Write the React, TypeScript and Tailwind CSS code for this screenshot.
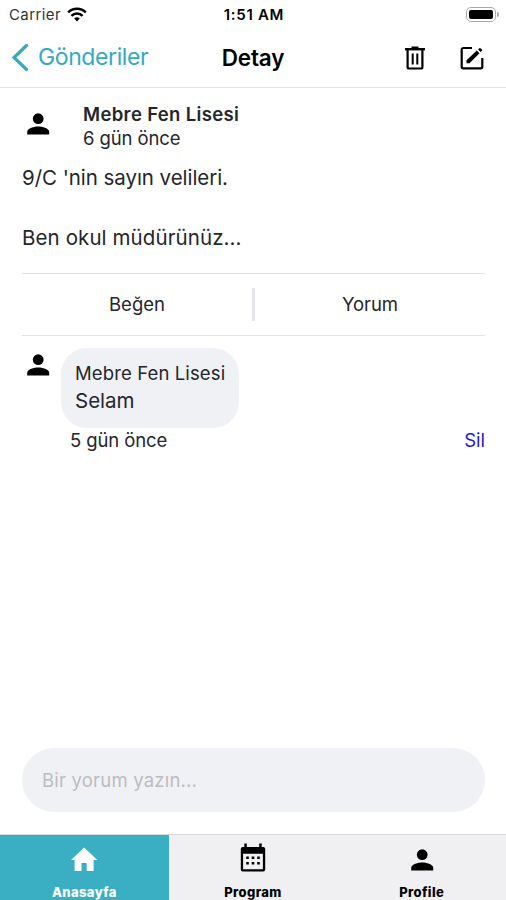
import { ReactNode } from 'react'

function PersonIcon() {
  return (
    <svg width="24" height="24" viewBox="0 0 24 24" fill="currentColor">
      <circle cx="12.2" cy="6.7" r="5.4" />
      <path d="M1.200 22.500v-2.600c0-3.600 7.300-5.300 11-5.300s11 1.700 11 5.300v2.600z" />
    </svg>
  )
}

function HomeIcon() {
  return (
    <svg width="28" height="28" viewBox="0 0 28 28" fill="currentColor">
      <path d="M14.200 1.500 1 14h3.600v11h6.900v-8h5.200v8h6.900V14h3.700z" />
    </svg>
  )
}

function CalendarIcon() {
  return (
    <svg width="26" height="30" viewBox="0 0 26 30" fill="currentColor" className="mb-[3px]">
      <path
        fillRule="evenodd"
        d="M4.300 0.500h2.500v3.500h12.400V0.500h2.500v3.500h1.500A2 2 0 0 1 25.200 6v20.500a2 2 0 0 1-2 2H2.800a2 2 0 0 1-2-2V6a2 2 0 0 1 2-2h1.500zM3.100 10.700v15.500h19.800V10.700z"
      />
      <path d="M6.200 13.500h2.600v2.600H6.200zM11.700 13.500h2.600v2.600h-2.600zM17.200 13.500h2.600v2.600h-2.600zM6.200 19h2.600v2.600H6.200zM11.700 19h2.600v2.600h-2.600zM17.200 19h2.600v2.600h-2.600z" />
    </svg>
  )
}

function TrashIcon() {
  return (
    <svg width="22" height="24" viewBox="0 0 22 24" fill="none" stroke="currentColor" strokeWidth="2">
      <path d="M1 3.200h20" strokeWidth="2.400" />
      <path d="M7.500 1.500h7" />
      <path d="M3.600 4v17a1.500 1.500 0 0 0 1.500 1.500h11.800a1.500 1.500 0 0 0 1.500-1.500V4" strokeWidth="2.200" />
      <path d="M8.700 7.500v11M13.300 7.500v11" />
    </svg>
  )
}

function EditIcon() {
  return (
    <svg width="24" height="24" viewBox="0 0 24 24" fill="none" stroke="currentColor" strokeWidth="2.200">
      <path d="M12 2H3.300A1.600 1.600 0 0 0 1.700 3.600v17.200a1.600 1.600 0 0 0 1.600 1.600h17.400a1.600 1.600 0 0 0 1.600-1.600V12" />
      <path d="M6.500 17.300v-3L16.800 4.500l2.700 2.700L9.500 17.300z" fill="currentColor" stroke="none" />
      <path d="m18 3.500 1.400-1.300a.8.8 0 0 1 1.100 0l1.400 1.400a.8.8 0 0 1 0 1.100l-1.300 1.400z" fill="currentColor" stroke="none" />
    </svg>
  )
}

function WifiIcon() {
  return (
    <svg width="20" height="15" viewBox="0 0 20 15" fill="none" stroke="currentColor" strokeWidth="2.500">
      <path d="M1.200 5.400a12.500 12.500 0 0 1 17.600 0" />
      <path d="M4.400 8.900a8 8 0 0 1 11.200 0" />
      <path d="M7.200 11.500a4 4 0 0 1 5.600 0L10 14.400z" fill="currentColor" stroke="none" />
    </svg>
  )
}

/** Status bar: carrier, clock and battery */
function StatusBar() {
  return (
    <div className="grid h-7 grid-cols-3 items-center pl-[9px] pr-[7px]">
      <div className="flex items-center gap-[6px]">
        <span className="pt-[2px] text-[15px] tracking-[0.400px] text-[#333]">Carrier</span>
        <WifiIcon />
      </div>
      <span className="pt-[2px] text-center text-[15px] font-semibold tracking-[0.700px]">1:51 AM</span>
      <div className="flex items-center justify-end gap-px">
        <div className="h-[15px] w-[30px] rounded-[5px] border border-[#aaa] p-[2px]">
          <div className="h-full rounded-[2px] bg-black" />
        </div>
        <div className="h-[5px] w-[2px] rounded-r-full bg-[#aaa]" />
      </div>
    </div>
  )
}

function TopBar() {
  return (
    <header className="grid h-[60px] grid-cols-3 items-center border-b border-[#e2e2e4] px-3">
      <div className="flex items-center gap-[9px] text-[#36aabd]">
        <svg width="17" height="28" viewBox="0 0 17 28" fill="none" stroke="currentColor" strokeWidth="3.200" strokeLinecap="round">
          <path d="M14.500 1.500 2 13.500l12.500 12" />
        </svg>
        <span className="text-[23px] tracking-[-0.400px]">Gönderiler</span>
      </div>
      <h1 className="text-center text-[22.500px] font-semibold tracking-[-0.200px]">Detay</h1>
      <div className="flex items-center justify-end gap-[34px] pr-[10px]">
        <TrashIcon />
        <EditIcon />
      </div>
    </header>
  )
}

function Post() {
  return (
    <article className="pl-[22px] pr-[21px] text-[#24262d]">
      <div className="flex h-[75px] pt-[15px]">
        <div className="w-[61px] pl-1 pt-[9px] text-black">
          <PersonIcon />
        </div>
        <div className="text-[18.500px] leading-[23.500px]">
          <div className="font-semibold tracking-[0.350px]">Mebre Fen Lisesi</div>
          <div className="tracking-[-0.100px]">6 gün önce</div>
        </div>
      </div>
      <div className="h-[110px] text-[20.500px] leading-[29.500px]">
        <p className="tracking-[-0.050px]">9/C 'nin sayın velileri.</p>
        <p className="mt-[30px] tracking-[0.100px]">Ben okul müdürünüz...</p>
      </div>
      <div className="flex h-[63px] items-center border-b border-t border-[#e1e3e5] text-[18.500px]">
        <div className="flex-1 text-center">Beğen</div>
        <div className="h-[33px] w-[3px] bg-[#e4e6e9]" />
        <div className="flex-1 text-center tracking-[-0.100px]">Yorum</div>
      </div>
    </article>
  )
}

function Comment() {
  return (
    <section className="flex pl-[22px] pr-[21px] pt-3 text-[#24262d]">
      <div className="w-[39px] pl-1 pt-[5px] text-black">
        <PersonIcon />
      </div>
      <div className="flex-1">
        <div className="h-[80px] w-[178px] rounded-[26px] bg-[#f0f1f5] pl-[14px] pt-[12px] leading-[27px]">
          <div className="text-[18.500px] tracking-[0.120px]">Mebre Fen Lisesi</div>
          <div className="text-[20.500px]">Selam</div>
        </div>
        <div className="flex justify-between pl-[9px] text-[18.500px] leading-6">
          <span className="tracking-[-0.100px]">5 gün önce</span>
          <button className="text-[#2118dc]">Sil</button>
        </div>
      </div>
    </section>
  )
}

function Tab({ icon, label, active }: { icon: ReactNode; label: string; active?: boolean }) {
  return (
    <div
      className={
        active
          ? 'flex flex-1 flex-col items-center bg-[#3aafc3] text-white'
          : 'flex flex-1 flex-col items-center text-black'
      }
    >
      <div className="flex h-[49px] items-center">{icon}</div>
      <span className="text-[13px] font-extrabold leading-4 tracking-[0.400px]">{label}</span>
    </div>
  )
}

export default function App() {
  return (
    <div className="flex h-[900px] w-[506px] flex-col overflow-hidden bg-white font-['Inter','Liberation_Sans',sans-serif] text-black">
      <StatusBar />
      <TopBar />
      <Post />
      <Comment />

      <div className="mb-[22px] mt-auto px-[22px]">
        <input
          className="h-[64px] w-[463px] rounded-full bg-[#f0f1f5] px-5 text-[18.500px] tracking-[0.200px] outline-none placeholder:text-[#bbbcc1]"
          placeholder="Bir yorum yazın..."
        />
      </div>

      <nav className="flex h-[66px] border-t border-[#d8d8da] bg-[#f0f0f2]">
        <Tab icon={<HomeIcon />} label="Anasayfa" active />
        <Tab icon={<CalendarIcon />} label="Program" />
        <Tab icon={<PersonIcon />} label="Profile" />
      </nav>
    </div>
  )
}
